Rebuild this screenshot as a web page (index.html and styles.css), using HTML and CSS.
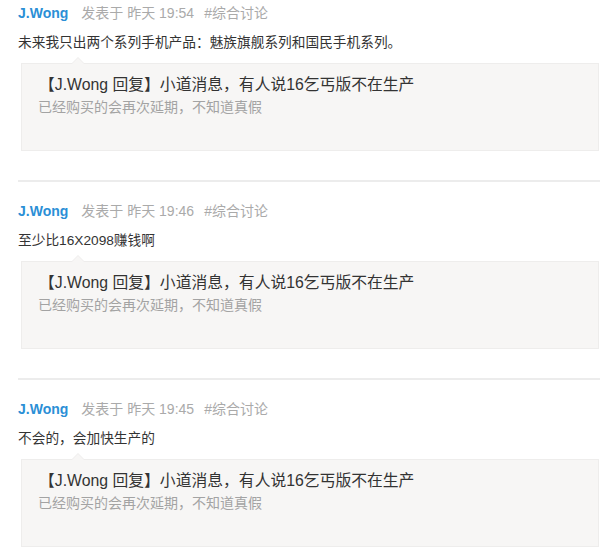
FILE: index.html
```html
<!DOCTYPE html>
<html lang="zh">
<head>
<meta charset="utf-8">
<link rel="stylesheet" href="styles.css">
</head>
<body>
<div class="feed">
  <div class="post">
    <div class="meta"><span class="author">J.Wong</span><span class="time">发表于 昨天 19:54</span><span class="tag">#综合讨论</span></div>
    <div class="content">未来我只出两个系列手机产品：魅族旗舰系列和国民手机系列。</div>
    <div class="reply">
      <div class="reply-main">【J.Wong 回复】小道消息，有人说16乞丐版不在生产</div>
      <div class="reply-sub">已经购买的会再次延期，不知道真假</div>
    </div>
  </div>
  <div class="post">
    <div class="meta"><span class="author">J.Wong</span><span class="time">发表于 昨天 19:46</span><span class="tag">#综合讨论</span></div>
    <div class="content">至少比16X2098赚钱啊</div>
    <div class="reply">
      <div class="reply-main">【J.Wong 回复】小道消息，有人说16乞丐版不在生产</div>
      <div class="reply-sub">已经购买的会再次延期，不知道真假</div>
    </div>
  </div>
  <div class="post">
    <div class="meta"><span class="author">J.Wong</span><span class="time">发表于 昨天 19:45</span><span class="tag">#综合讨论</span></div>
    <div class="content">不会的，会加快生产的</div>
    <div class="reply">
      <div class="reply-main">【J.Wong 回复】小道消息，有人说16乞丐版不在生产</div>
      <div class="reply-sub">已经购买的会再次延期，不知道真假</div>
    </div>
  </div>
</div>
</body>
</html>
```

FILE: styles.css
```css
html, body {
  margin: 0;
  padding: 0;
  background: #ffffff;
}
body {
  font-family: "Liberation Sans", "Noto Sans CJK SC", sans-serif;
  color: #333;
  width: 600px;
  height: 558px;
  overflow: hidden;
}
.feed {
  padding-left: 18px;
  display: flex;
  flex-direction: column;
}
.post {
  flex-shrink: 0;
  padding-bottom: 29px;
  border-bottom: 2px solid #ececec;
  margin-bottom: 16px;
}
.meta {
  display: flex;
  align-items: center;
  height: 26px;
  line-height: 26px;
  font-size: 14px;
  color: #aaa;
}
.author {
  color: #2b8fd6;
  font-weight: bold;
  margin-right: 13px;
}
.time {
  margin-right: 10px;
}
.content {
  margin-top: 7px;
  font-size: 13.7px;
  line-height: 20px;
  color: #333;
}
.reply {
  position: relative;
  margin-top: 10px;
  margin-left: 3px;
  margin-right: 1px;
  background: #f7f6f5;
  border: 1px solid #eeedec;
  padding: 10px 12px 32px 16px;
}
.reply::before,
.reply::after {
  content: "";
  position: absolute;
  width: 0;
  height: 0;
  border-style: solid;
  border-color: transparent;
}
.reply::before {
  top: -7px;
  left: 49px;
  border-width: 0 7px 7px 7px;
  border-bottom-color: #eeedec;
}
.reply::after {
  top: -6px;
  left: 50px;
  border-width: 0 6px 6px 6px;
  border-bottom-color: #f7f6f5;
}
.reply-main {
  margin-left: 1px;
  font-size: 15.8px;
  line-height: 22px;
  color: #333;
}
.reply-sub {
  font-size: 14px;
  line-height: 22px;
  color: #a3a3a3;
}
```
